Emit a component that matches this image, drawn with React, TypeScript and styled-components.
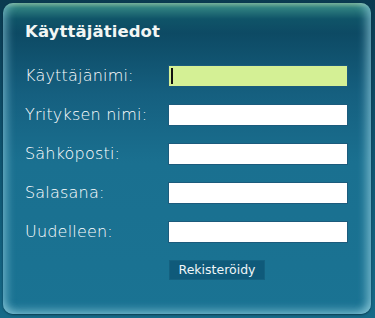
import React from "react";
import styled, { createGlobalStyle } from "styled-components";

const Global = createGlobalStyle`
  html, body { margin: 0; padding: 0; }
  body {
    width: 375px;
    height: 318px;
    overflow: hidden;
    background: linear-gradient(180deg, #0a3a50 0%, #0f5470 50%, #166a88 100%);
    font-family: "DejaVu Sans", Verdana, sans-serif;
  }
`;

const Page = styled.div`
  padding: 3px 4px 4px 3px;
  box-sizing: border-box;
  width: 375px;
  height: 318px;
`;

const Panel = styled.form`
  box-sizing: border-box;
  height: 311px;
  border-radius: 10px;
  padding: 18px 0 0 22px;
  background: linear-gradient(
    180deg,
    #72ad92 0px,
    #2f8080 5px,
    #0f5468 16px,
    #0d4a64 30px,
    #155f7f 90px,
    #1a7090 160px,
    #1a7393 100%
  );
  box-shadow:
    inset 9px 0 8px -5px rgba(150, 210, 225, 0.55),
    inset -10px 0 9px -5px rgba(150, 210, 225, 0.6),
    inset 0 -9px 8px -5px rgba(150, 210, 225, 0.6),
    0 1px 2px rgba(0, 30, 45, 0.6);
`;

const Title = styled.h1`
  margin: 0 0 23px 0;
  font-size: 16.5px;
  font-weight: bold;
  color: #f2f6f4;
  line-height: 21px;
  letter-spacing: 0.1px;
`;

const Rows = styled.div`
  display: grid;
  grid-template-columns: 143px 180px;
  row-gap: 17px;
  align-items: center;
`;

const Label = styled.label`
  font-size: 16px;
  font-weight: 200;
  color: #ffffff;
  font-family: "DejaVu Sans", Verdana, sans-serif;
  letter-spacing: 0.2px;
  line-height: 22px;
`;

const Field = styled.input<{ $active?: boolean }>`
  box-sizing: border-box;
  width: 180px;
  height: 22px;
  margin: 0;
  padding: 0 3px;
  border: 1px solid #1c5b7c;
  background: ${(p) => (p.$active ? "#d4f095" : "#ffffff")};
  outline: none;
  font-size: 13px;
  caret-color: #000;
`;

const Caret = styled.span`
  display: block;
  width: 2px;
  height: 16px;
  background: #111;
  position: absolute;
  left: 3px;
  top: 3px;
`;

const FieldWrap = styled.div`
  position: relative;
  width: 180px;
  height: 22px;
`;

const ButtonRow = styled.div`
  padding: 16px 0 0 144px;
`;

const Button = styled.button`
  box-sizing: border-box;
  width: 96px;
  height: 20px;
  padding: 0;
  border: 1px solid #146180;
  background: #0f5a7a;
  color: #f0f6f8;
  font-family: "DejaVu Sans", Verdana, sans-serif;
  font-size: 12.5px;
  line-height: 18px;
  cursor: pointer;
`;

const rows = [
  { label: "Käyttäjänimi:", type: "text" },
  { label: "Yrityksen nimi:", type: "text" },
  { label: "Sähköposti:", type: "text" },
  { label: "Salasana:", type: "password" },
  { label: "Uudelleen:", type: "password" },
];

export default function App() {
  return (
    <>
      <Global />
      <Page>
        <Panel onSubmit={(e) => e.preventDefault()}>
          <Title>Käyttäjätiedot</Title>
          <Rows>
            {rows.map((r, i) => (
              <React.Fragment key={r.label}>
                <Label>{r.label}</Label>
                <FieldWrap>
                  <Field type={r.type} $active={i === 0} />
                  {i === 0 && <Caret />}
                </FieldWrap>
              </React.Fragment>
            ))}
          </Rows>
          <ButtonRow>
            <Button type="submit">Rekisteröidy</Button>
          </ButtonRow>
        </Panel>
      </Page>
    </>
  );
}
